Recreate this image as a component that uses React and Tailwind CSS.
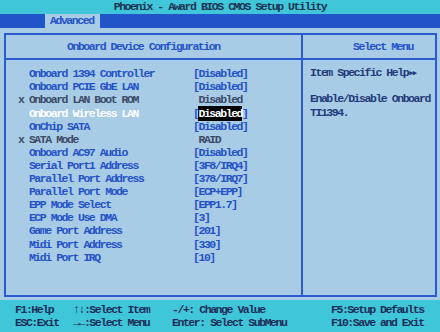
import React from "react";

const items = [
  { label: "Onboard 1394 Controller", value: "[Disabled]" },
  { label: "Onboard PCIE GbE LAN", value: "[Disabled]" },
  { label: "Onboard LAN Boot ROM", value: " Disabled", locked: true },
  { label: "Onboard Wireless LAN", value: "Disabled", selected: true },
  { label: "OnChip SATA", value: "[Disabled]" },
  { label: "SATA Mode", value: " RAID", locked: true },
  { label: "Onboard AC97 Audio", value: "[Disabled]" },
  { label: "Serial Port1 Address", value: "[3F8/IRQ4]" },
  { label: "Parallel Port Address", value: "[378/IRQ7]" },
  { label: "Parallel Port Mode", value: "[ECP+EPP]" },
  { label: "EPP Mode Select", value: "[EPP1.7]" },
  { label: "ECP Mode Use DMA", value: "[3]" },
  { label: "Game Port Address", value: "[201]" },
  { label: "Midi Port Address", value: "[330]" },
  { label: "Midi Port IRQ", value: "[10]" },
];

function ItemRow({ item }) {
  let labelColor = "text-[#2452c6]";
  if (item.locked) labelColor = "text-[#3b4a66]";
  if (item.selected) labelColor = "text-white";

  return (
    <div className="flex h-[13.1px] items-center whitespace-pre">
      <div className={`w-[175px] ${labelColor}`}>
        {item.locked ? "x " : "  "}
        {item.label}
      </div>
      {item.selected ? (
        <div className="text-[#2452c6]">
          [<span className="bg-black text-white py-[1px]">{item.value}</span>]
        </div>
      ) : (
        <div className={item.locked ? "text-[#3b4a66]" : "text-[#2452c6]"}>{item.value}</div>
      )}
    </div>
  );
}

export default function App() {
  return (
    <div
      className="w-[440px] h-[332px] overflow-hidden font-bold text-[11.5px] tracking-[-1.45px] leading-none"
      style={{ fontFamily: '"Liberation Mono", "DejaVu Sans Mono", monospace' }}
    >
      {/* Title bar */}
      <div className="h-[14px] bg-[#3fc6d8] flex items-center justify-center text-[#1c3252]">
        Phoenix - Award BIOS CMOS Setup Utility
      </div>

      {/* Menu band */}
      <div className="h-[14px] bg-[#2153c9] flex">
        <div className="ml-[45px] w-[55px] h-full bg-[#a8cbe6] flex items-center pl-[5px] text-[#2452c6]">
          Advanced
        </div>
      </div>

      {/* Main panel */}
      <div className="h-[272px] bg-[#a8cbe6] pt-[5px] pl-[4px] pr-[3px] pb-[3px]">
        <div className="h-full border-2 border-[#2c5ad0] flex">
          {/* Left column */}
          <div className="w-[297px] border-r-2 border-[#2c5ad0] flex flex-col">
            <div className="h-[25px] border-b-2 border-[#2c5ad0] flex items-center pl-[61px] text-[#2452c6]">
              Onboard Device Configuration
            </div>
            <div className="pt-[7.5px] pl-[12px]">
              {items.map((item) => (
                <ItemRow key={item.label} item={item} />
              ))}
            </div>
          </div>

          {/* Right column */}
          <div className="flex-1 flex flex-col">
            <div className="h-[25px] border-b-2 border-[#2c5ad0] flex items-center pl-[50px] text-[#2452c6]">
              Select Menu
            </div>
            <div className="pt-[6.5px] pl-[7px] text-[#1f3a78] whitespace-pre">
              <div className="h-[13.1px] flex items-center">
                Item Specific Help
                <span className="text-[7px] tracking-[-0.5px] ml-[1px]">▶▶</span>
              </div>
              <div className="h-[13.1px]" />
              <div className="h-[13.1px] flex items-center">Enable/Disable Onboard</div>
              <div className="h-[13.1px] flex items-center">TI1394.</div>
            </div>
          </div>
        </div>
      </div>

      {/* Footer */}
      <div className="h-[32px] bg-[#3fc6d8] pt-[3.5px] pl-[15px] text-[#1d2d58] whitespace-pre">
        <div className="flex h-[13px] items-center">
          <div className="w-[58px]">F1:Help</div>
          <div className="w-[99px]">↑↓:Select Item</div>
          <div className="w-[159px]">-/+: Change Value</div>
          <div>F5:Setup Defaults</div>
        </div>
        <div className="flex h-[13px] items-center">
          <div className="w-[58px]">ESC:Exit</div>
          <div className="w-[99px]">→←:Select Menu</div>
          <div className="w-[159px]">Enter: Select SubMenu</div>
          <div>F10:Save and Exit</div>
        </div>
      </div>
    </div>
  );
}
